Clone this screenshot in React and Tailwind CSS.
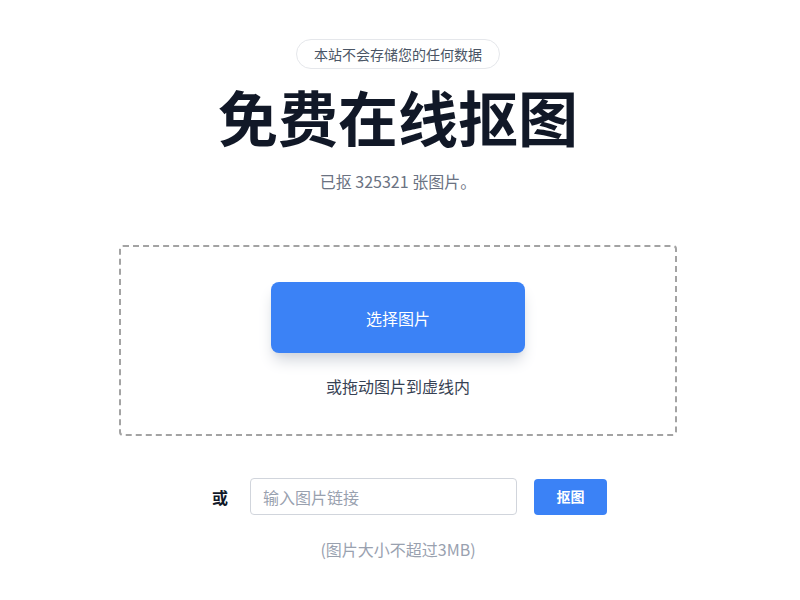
import React from "react";

export default function App() {
  return (
    <div
      className="min-h-screen w-full bg-white flex flex-col items-center pr-1"
      style={{ fontFamily: '"Noto Sans CJK SC", "Noto Sans", sans-serif' }}
    >
      {/* badge */}
      <div className="mt-[39px] h-[30px] px-[17px] flex items-center rounded-full border border-gray-200 text-[14px] text-gray-600">
        本站不会存储您的任何数据
      </div>

      <h1 className="mt-[11px] text-[60px] leading-[72px] font-bold text-[#111827]">
        免费在线抠图
      </h1>

      <p className="mt-[17px] text-[16px] leading-6 text-gray-500">已抠 325321 张图片。</p>

      {/* drop zone */}
      <div className="mt-[52px] w-[558px] h-[191px] border-2 border-dashed border-[#a3a3a3] rounded flex flex-col items-center">
        <button className="mt-[35px] w-[254px] h-[71px] rounded-lg bg-[#3b82f6] text-white text-[16px] shadow-lg shadow-gray-300">
          选择图片
        </button>
        <p className="mt-[21px] text-[16px] leading-6 text-gray-700">或拖动图片到虚线内</p>
      </div>

      {/* url row */}
      <div className="mt-[42px] flex items-center ml-[23px]">
        <span className="text-[16px] font-bold text-gray-900">或</span>
        <input
          className="ml-[22px] w-[267px] h-[37px] rounded border border-gray-300 px-3 text-[16px] text-gray-700 placeholder:text-gray-400 outline-none"
          placeholder="输入图片链接"
        />
        <button className="ml-[17px] w-[73px] h-[36px] rounded bg-[#3b82f6] text-white text-[14px] font-bold">
          抠图
        </button>
      </div>

      <p className="mt-[22px] text-[16px] leading-6 text-gray-400">(图片大小不超过3MB)</p>
    </div>
  );
}
